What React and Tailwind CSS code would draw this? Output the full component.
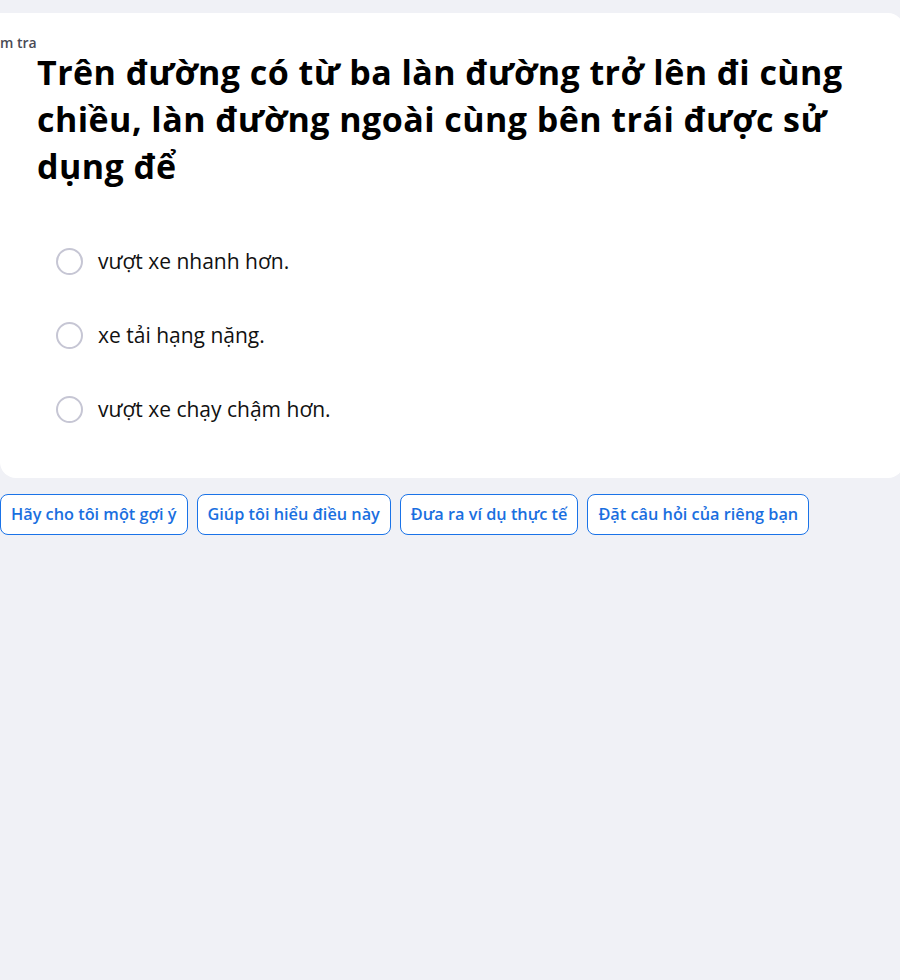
import React from "react";

const options = ["vượt xe nhanh hơn.", "xe tải hạng nặng.", "vượt xe chạy chậm hơn."];
const prompts = [
  "Hãy cho tôi một gợi ý",
  "Giúp tôi hiểu điều này",
  "Đưa ra ví dụ thực tế",
  "Đặt câu hỏi của riêng bạn",
];

const App = () => {
  return (
    <div
      className="min-h-[980px] w-[900px] bg-[#f0f1f6] pt-[13px] overflow-hidden"
      style={{ fontFamily: '"Open Sans", "Noto Sans", sans-serif' }}
    >
      <div className="bg-white rounded-tr-[16px] rounded-br-[16px] rounded-bl-[16px] h-[465px] w-[904px] relative">
        <div className="absolute left-0 top-[19px] text-[14px] font-semibold text-[#4a4a55]">m tra</div>
        <h1 className="pl-[37px] pt-[36px] w-[875px] text-[34px] leading-[47px] font-bold tracking-[0.45px] text-black">
          Trên đường có từ ba làn đường trở lên đi cùng chiều, làn đường ngoài cùng bên trái được sử dụng để
        </h1>
        <div className="flex flex-col gap-[47px] pl-[56px] pt-[58px]">
          {options.map((o) => (
            <label key={o} className="flex items-center gap-[15px] cursor-pointer">
              <span className="w-[27px] h-[27px] rounded-full border-2 border-[#c6c6d4] bg-white" />
              <span className="text-[21px] text-[#111] leading-[27px]">{o}</span>
            </label>
          ))}
        </div>
      </div>
      <div className="flex gap-[9px] mt-[16px]">
        {prompts.map((p) => (
          <button
            key={p}
            className="h-[41px] px-[10px] rounded-[8px] border border-[#1a73e8] bg-white text-[#1a6fe0] text-[16.3px] font-semibold"
          >
            {p}
          </button>
        ))}
      </div>
    </div>
  );
};

export default App;
